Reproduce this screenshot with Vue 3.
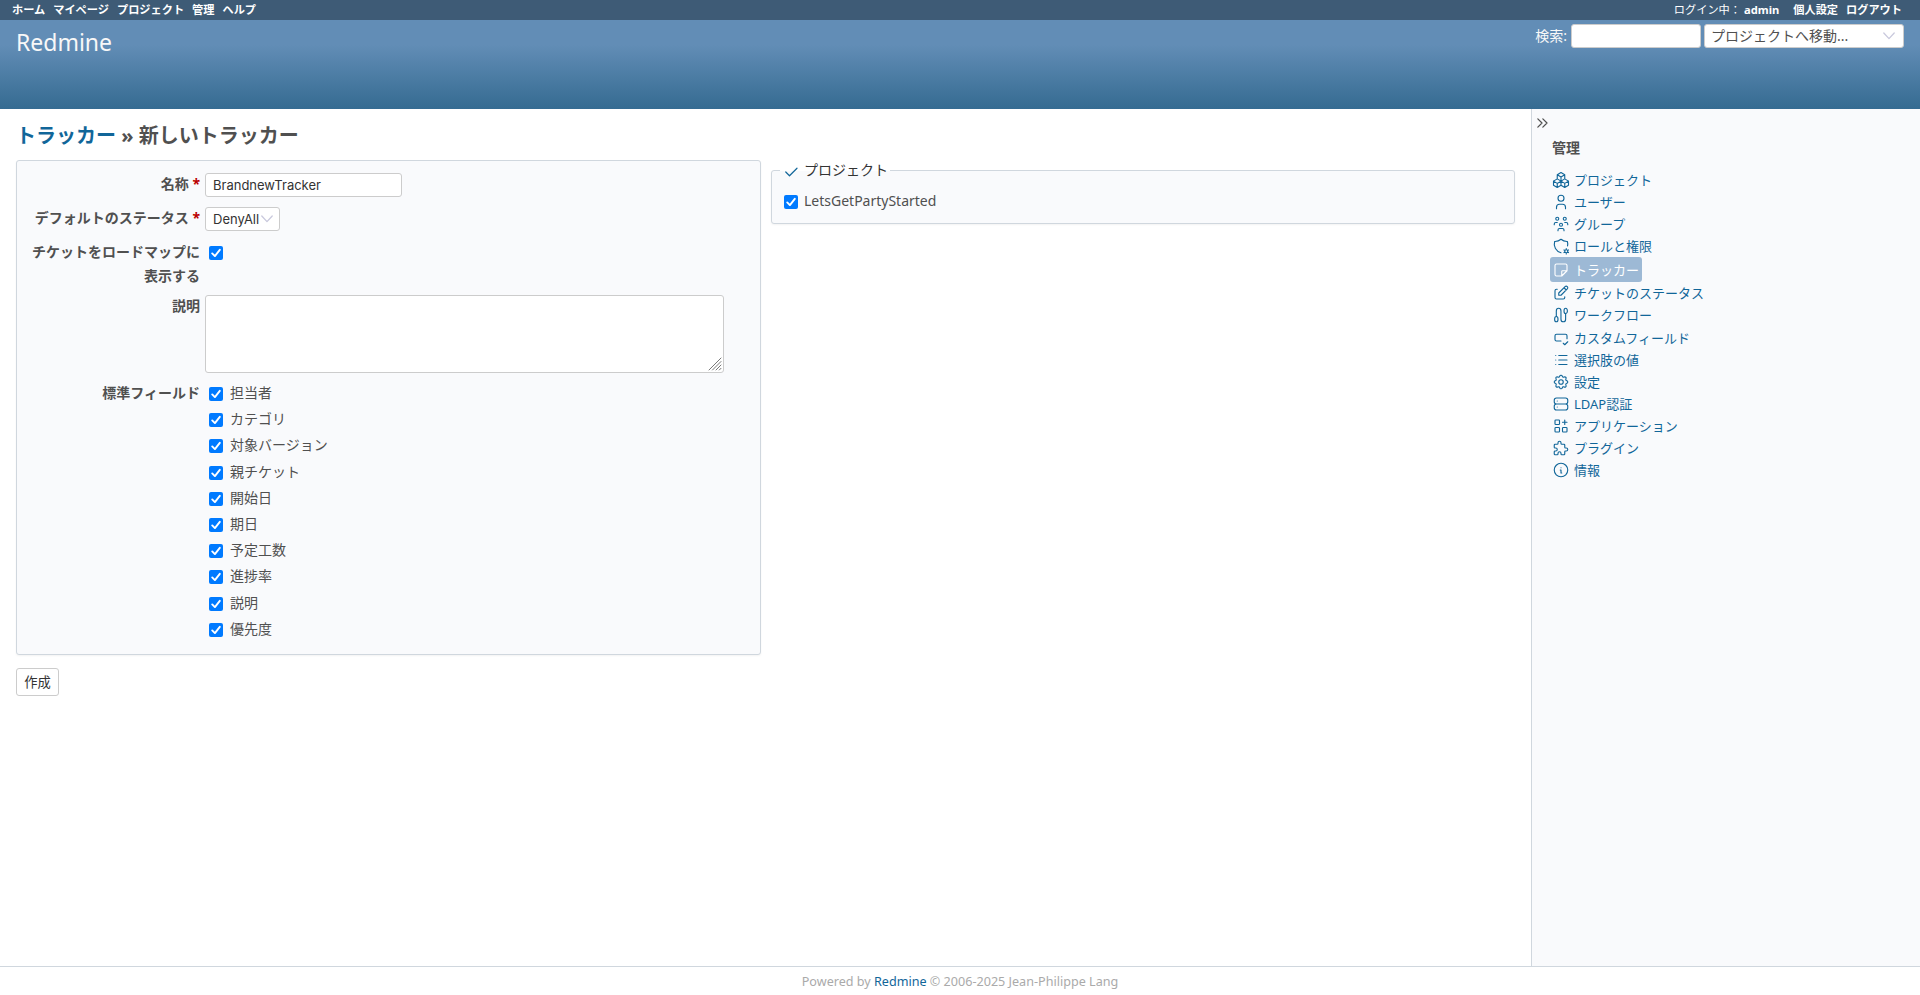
<script setup>
const topLinks = ['ホーム', 'マイページ', 'プロジェクト', '管理', 'ヘルプ']
const fields = ['担当者', 'カテゴリ', '対象バージョン', '親チケット', '開始日', '期日', '予定工数', '進捗率', '説明', '優先度']
const adminMenu = [
  { label: 'プロジェクト', h: 22, d: 'M7 16.5l-5 -3l5 -3l5 3v5.5l-5 3z M2 13.5v5.5l5 3 M7 16.545l5 -3.03 M17 16.5l-5 -3l5 -3l5 3v5.5l-5 3z M12 19l5 3 M17 16.5l5 -3 M12 13.5v-5.5l-5 -3l5 -3l5 3v5.5 M7 5.03v5.455 M12 8l5 -3' },
  { label: 'ユーザー', h: 22, d: 'M8 7a4 4 0 1 0 8 0a4 4 0 0 0 -8 0 M6 21v-2a4 4 0 0 1 4 -4h4a4 4 0 0 1 4 4v2' },
  { label: 'グループ', h: 22, d: 'M10 13a2 2 0 1 0 4 0a2 2 0 0 0 -4 0 M8 21v-1a2 2 0 0 1 2 -2h4a2 2 0 0 1 2 2v1 M15 5a2 2 0 1 0 4 0a2 2 0 0 0 -4 0 M17 10h2a2 2 0 0 1 2 2v1 M5 5a2 2 0 1 0 4 0a2 2 0 0 0 -4 0 M3 13v-1a2 2 0 0 1 2 -2h2' },
  { label: 'ロールと権限', h: 22, d: 'M12 21a12 12 0 0 1 -8.5 -15a12 12 0 0 0 8.5 -3a12 12 0 0 0 8.5 3c.568 1.933 .635 3.957 .223 5.89 M17 19a2 2 0 1 0 4 0a2 2 0 1 0 -4 0 M19 15.5v1.5 M19 21v1.5 M22.03 17.25l-1.3 .75 M17.27 20l-1.3 .75 M15.97 17.25l1.3 .75 M20.73 20l1.3 .75' },
  { label: 'トラッカー', h: 25, selected: true, d: 'M13 20l7 -7 M13 20v-6a1 1 0 0 1 1 -1h6v-7a2 2 0 0 0 -2 -2h-12a2 2 0 0 0 -2 2v12a2 2 0 0 0 2 2h7' },
  { label: 'チケットのステータス', h: 22, d: 'M7 7h-1a2 2 0 0 0 -2 2v9a2 2 0 0 0 2 2h9a2 2 0 0 0 2 -2v-1 M20.385 6.585a2.1 2.1 0 0 0 -2.97 -2.97l-8.415 8.385v3h3l8.385 -8.415z M16 5l3 3' },
  { label: 'ワークフロー', h: 22, d: 'M3.500 17.500a2.250 3.500 0 1 0 4.500 0a2.250 3.500 0 1 0 -4.500 0 M16 6.500a2.250 3.500 0 1 0 4.500 0a2.250 3.500 0 1 0 -4.500 0 M5.750 14v-7.500a3.100 3.500 0 0 1 6.200 0v11a3.100 3.500 0 0 0 6.200 0v-7.500' },
  { label: 'カスタムフィールド', h: 23, d: 'M20 13v-4a2 2 0 0 0 -2 -2h-12a2 2 0 0 0 -2 2v5a2 2 0 0 0 2 2h6 M15 19l2 2l4 -4' },
  { label: '選択肢の値', h: 22, d: 'M9 6h11 M9 12h11 M9 18h11 M5 6v.01 M5 12v.01 M5 18v.01' },
  { label: '設定', h: 22, d: 'M10.325 4.317c.426 -1.756 2.924 -1.756 3.350 0a1.724 1.724 0 0 0 2.573 1.066c1.543 -.940 3.310 .826 2.370 2.370a1.724 1.724 0 0 0 1.065 2.572c1.756 .426 1.756 2.924 0 3.350a1.724 1.724 0 0 0 -1.066 2.573c.940 1.543 -.826 3.310 -2.370 2.370a1.724 1.724 0 0 0 -2.572 1.065c-.426 1.756 -2.924 1.756 -3.350 0a1.724 1.724 0 0 0 -2.573 -1.066c-1.543 .940 -3.310 -.826 -2.370 -2.370a1.724 1.724 0 0 0 -1.065 -2.572c-1.756 -.426 -1.756 -2.924 0 -3.350a1.724 1.724 0 0 0 1.066 -2.573c-.940 -1.543 .826 -3.310 2.370 -2.370c1 .608 2.296 .070 2.572 -1.065z M9 12a3 3 0 1 0 6 0a3 3 0 0 0 -6 0' },
  { label: 'LDAP認証', h: 22, d: 'M3 7a3 3 0 0 1 3 -3h12a3 3 0 0 1 3 3v2a3 3 0 0 1 -3 3h-12a3 3 0 0 1 -3 -3z M3 15a3 3 0 0 1 3 -3h12a3 3 0 0 1 3 3v2a3 3 0 0 1 -3 3h-12a3 3 0 0 1 -3 -3z M7 8v.01 M7 16v.01' },
  { label: 'アプリケーション', h: 22, d: 'M4 5a1 1 0 0 1 1 -1h4a1 1 0 0 1 1 1v4a1 1 0 0 1 -1 1h-4a1 1 0 0 1 -1 -1z M4 15a1 1 0 0 1 1 -1h4a1 1 0 0 1 1 1v4a1 1 0 0 1 -1 1h-4a1 1 0 0 1 -1 -1z M14 15a1 1 0 0 1 1 -1h4a1 1 0 0 1 1 1v4a1 1 0 0 1 -1 1h-4a1 1 0 0 1 -1 -1z M14 7h6 M17 4v6' },
  { label: 'プラグイン', h: 22, d: 'M4 7h3a1 1 0 0 0 1 -1v-1a2 2 0 0 1 4 0v1a1 1 0 0 0 1 1h3a1 1 0 0 1 1 1v3a1 1 0 0 0 1 1h1a2 2 0 0 1 0 4h-1a1 1 0 0 0 -1 1v3a1 1 0 0 1 -1 1h-3a1 1 0 0 1 -1 -1v-1a2 2 0 0 0 -4 0v1a1 1 0 0 1 -1 1h-3a1 1 0 0 1 -1 -1v-3a1 1 0 0 1 1 -1h1a2 2 0 0 0 0 -4h-1a1 1 0 0 1 -1 -1v-3a1 1 0 0 1 1 -1' },
  { label: '情報', h: 22, d: 'M3 12a9 9 0 1 0 18 0a9 9 0 0 0 -18 0 M12 9h.01 M11 12h1v4h1' }
]
</script>

<template>
  <div class="page">
    <nav class="top-menu">
      <div class="links"><a v-for="l in topLinks" :key="l">{{ l }}</a></div>
      <div class="account"><span class="logged">ログイン中：</span><a class="user">admin</a><a class="prefs">個人設定</a><a>ログアウト</a></div>
    </nav>
    <header class="header">
      <h1>Redmine</h1>
      <div class="quick">
        <label>検索:</label>
        <input class="search" type="text">
        <div class="select jump"><span>プロジェクトへ移動...</span><svg class="chev" viewBox="0 0 12 8"><path d="M.8 1L6 6.600L11.200 1" /></svg></div>
      </div>
    </header>
    <div class="main">
      <main class="content">
        <h2><a>トラッカー</a> » 新しいトラッカー</h2>
        <div class="split">
          <section class="box form">
            <div class="row r1"><label>名称<span class="req"> *</span></label><input class="name" type="text" value="BrandnewTracker"></div>
            <div class="row r2"><label>デフォルトのステータス<span class="req"> *</span></label><div class="select status"><span>DenyAll</span><svg class="chev" viewBox="0 0 12 8"><path d="M.8 1L6 6.600L11.200 1" /></svg></div></div>
            <div class="row r3"><label>チケットをロードマップに表示する</label><span class="cb"><svg viewBox="0 0 14 14"><path d="M3.200 7.400L5.900 10.100L10.800 3.800" /></svg></span></div>
            <div class="row r4"><label>説明</label><div class="area"><svg viewBox="0 0 14 14"><path d="M1 13L13 1M4.500 13L13 4.500M8 13L13 8M11.300 13L13 11.300" /></svg></div></div>
            <div class="row r5">
              <label>標準フィールド</label>
              <div class="fields">
                <div v-for="f in fields" :key="f" class="field"><span class="cb"><svg viewBox="0 0 14 14"><path d="M3.200 7.400L5.900 10.100L10.800 3.800" /></svg></span><span>{{ f }}</span></div>
              </div>
            </div>
          </section>
          <section class="box projects">
            <div class="legend"><svg viewBox="0 0 24 24"><path d="M5 12l5 5l10 -10" /></svg><span>プロジェクト</span></div>
            <div class="project"><span class="cb"><svg viewBox="0 0 14 14"><path d="M3.200 7.400L5.900 10.100L10.800 3.800" /></svg></span><span>LetsGetPartyStarted</span></div>
          </section>
        </div>
        <button class="submit">作成</button>
      </main>
      <aside class="sidebar">
        <svg class="collapse" viewBox="0 0 24 24"><path d="M7 7l5 5l-5 5 M13 7l5 5l-5 5" /></svg>
        <h3>管理</h3>
        <ul>
          <li v-for="m in adminMenu" :key="m.label" :style="{ height: m.h + 'px' }">
            <a :class="{ selected: m.selected }"><svg viewBox="0 0 24 24"><path :d="m.d" /></svg><span>{{ m.label }}</span></a>
          </li>
        </ul>
      </aside>
    </div>
    <footer>Powered by <a>Redmine</a> © 2006-2025 Jean-Philippe Lang</footer>
  </div>
</template>

<style>
body { margin: 0; }
</style>

<style scoped>
.page { height: 995px; display: flex; flex-direction: column; overflow: hidden; background: #fff; color: #505050; font-family: "Noto Sans", "Noto Sans CJK JP", sans-serif; font-size: 14px; }
.page * { box-sizing: border-box; }
svg { fill: none; stroke: currentColor; stroke-linecap: round; stroke-linejoin: round; flex: none; }
a { color: #169; }
.top-menu { height: 20px; flex: none; background: #3e5b76; color: #fff; display: flex; justify-content: space-between; padding: 0 18px 0 12px; font-size: 11.200px; line-height: 19px; white-space: nowrap; }
.top-menu a { color: #fff; font-weight: 700; }
.links { display: flex; gap: 8px; }
.account { display: flex; }
.user { margin: 0 14px 0 3px; }
.prefs { margin-right: 8px; }
.header { height: 89px; flex: none; display: flex; justify-content: space-between; padding: 4px 16px 0; background: linear-gradient(#628db6 0, #628db6 28%, #356b91 100%); color: #f8f8f8; }
h1 { margin: 0; font-size: 23px; line-height: 37px; height: 37px; font-weight: 400; }
.quick { display: flex; height: 24px; align-items: center; }
.quick label { line-height: 24px; margin-right: 4px; }
input, .select { border: 1px solid #ccc; border-radius: 3px; background: #fff; height: 24px; color: #333; font-family: Inter, "Noto Sans CJK JP", sans-serif; font-size: 13px; padding: 0 7px; outline: none; }
.search { width: 130px; margin-right: 3px; }
.select { display: flex; align-items: center; justify-content: space-between; white-space: nowrap; }
.jump { width: 200px; padding: 0 8px 0 6px; font-family: "Noto Sans", "Noto Sans CJK JP", sans-serif; font-size: 14px; color: #505050; }
.jump span { line-height: 22px; height: 22px; }
.chev { width: 12px; height: 8px; stroke: #c9c9dd; stroke-width: 1.300; }
.main { flex: 1; display: flex; min-height: 0; }
.content { flex: 1; padding: 10px 16px 0; }
h2 { margin: 0 0 8px; height: 33px; line-height: 33px; font-size: 20px; font-weight: 700; white-space: pre; }
.split { display: grid; grid-template-columns: 745px 744px; gap: 10px; align-items: start; }
.box { background: #f9fafc; border: 1px solid #d0d7de; border-radius: 3px; box-shadow: 0 1px 2px rgba(0,0,0,.05); }
.form { height: 495px; padding: 12px 0 0 8px; }
.row { display: flex; align-items: flex-start; }
.row > label { width: 175px; text-align: right; font-weight: 700; line-height: 24px; margin-right: 5px; flex: none; margin-top: -1px; }
.req { color: #b00; }
.r1, .r2 { height: 34px; }
.r3 { height: 54px; }
.r4 { height: 87px; }
.name { width: 197px; }
.status { width: 75px; padding-right: 6px; }
.cb { width: 14px; height: 14px; flex: none; background: #007aff; border-radius: 2px; display: block; color: #fff; }
.cb svg { display: block; width: 14px; height: 14px; stroke-width: 1.900; }
.r3 .cb { margin: 5px 0 0 4px; }
.area { width: 519px; height: 78px; background: #fff; border: 1px solid #ccc; border-radius: 3px; display: flex; align-items: flex-end; justify-content: flex-end; padding: 1px; }
.area svg { width: 14px; height: 14px; stroke: #777; stroke-width: 1; }
.fields { padding-left: 4px; margin-top: -1px; }
.field { display: flex; height: 26.200px; line-height: 24px; }
.field .cb { margin: 6px 7px 0 0; }
.projects { margin-top: 10px; height: 54px; padding-left: 12px; }
.legend { display: flex; width: max-content; height: 20px; line-height: 20px; margin: -11px 0 0 -4px; padding: 0 2px 0 4px; color: #333; background: linear-gradient(#fff 55%, #f9fafc 55%); }
.legend svg { width: 18px; height: 18px; margin: 3px 4px 0 -2px; color: #169; stroke-width: 1.600; }
.project { display: flex; line-height: 24px; margin-top: 9px; }
.project .cb { margin: 6px 6px 0 0; }
.submit { display: block; margin: 13px 0 0; width: 43px; height: 28px; padding: 0; border: 1px solid #ccc; border-radius: 3px; background: #fff; color: #333; font: 13.300px/24px "Noto Sans CJK JP", sans-serif; }
.sidebar { width: 389px; border-left: 1px solid #d0d7de; background: #f9fafc; padding: 4px 0 0 20px; }
.collapse { display: block; width: 20px; height: 20px; margin-left: -20px; stroke-width: 1.500; color: #505050; }
h3 { margin: 3px 0 9px; font-size: 14px; line-height: 24px; font-weight: 700; }
ul { margin: 0; padding: 0; list-style: none; font-size: 13px; }
li { display: flex; align-items: center; }
li a { display: flex; align-items: center; height: 22px; line-height: 22px; white-space: nowrap; }
li svg { width: 18px; height: 18px; margin-right: 4px; stroke-width: 1.500; }
li a.selected { background: #9db9d5; color: #fff; height: 25px; margin-left: -2px; padding: 0 3px 0 2px; border-radius: 3px; }
footer { height: 29px; flex: none; border-top: 1px solid #d0d7de; text-align: center; font-size: 12.600px; line-height: 29px; color: #aaa; }
</style>
